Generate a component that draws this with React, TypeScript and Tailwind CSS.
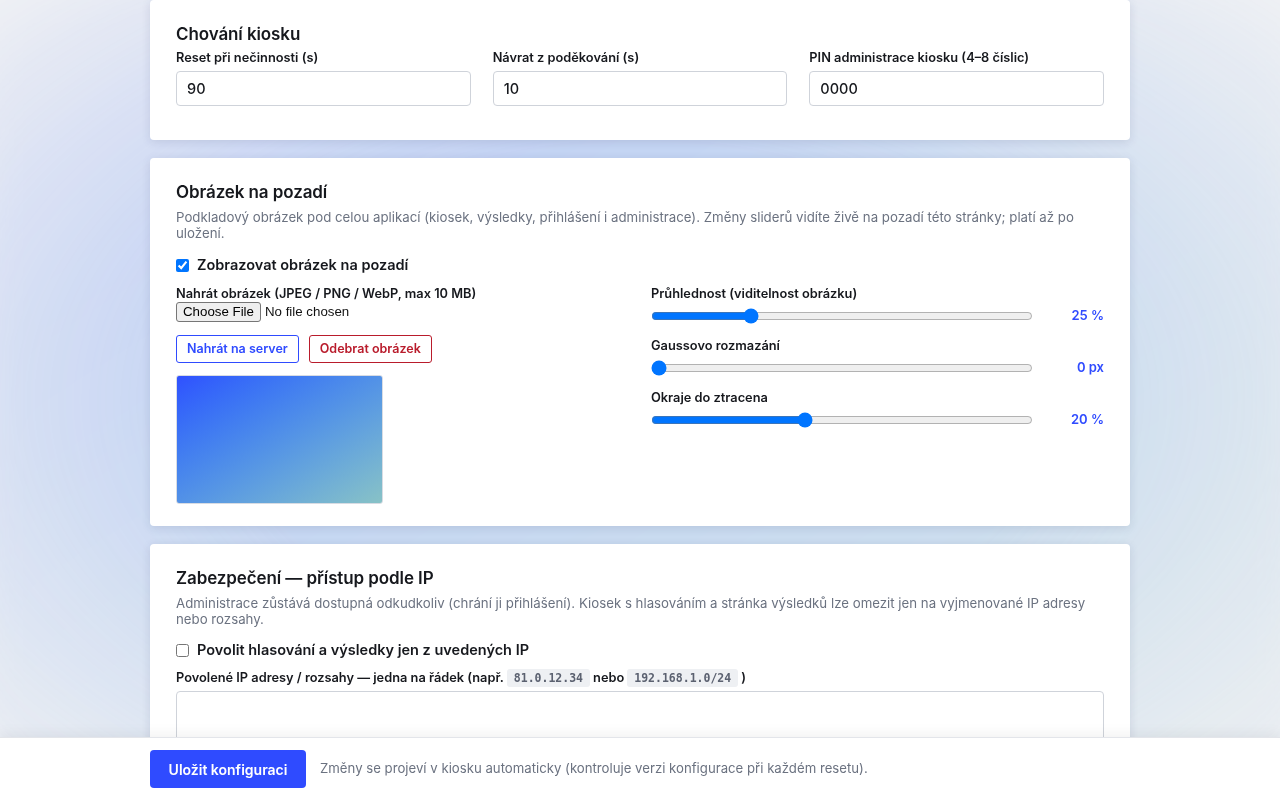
import { useState } from 'react';

const FONT = "font-['Inter','Noto_Sans',sans-serif]";

function Card({ title, description, children }: { title: string; description?: string; children: React.ReactNode }) {
  return (
    <section className="bg-white rounded-[4px] shadow-[0_2px_10px_rgba(30,40,90,0.12)] px-[26px] pt-[23px] pb-[22px]">
      <h2 className="text-[17px] leading-[22px] font-semibold text-[#16181d] tracking-[-0.1px]">{title}</h2>
      {description && (
        <p className="mt-[6px] text-[13.25px] leading-[16px] text-[#6b7280]">{description}</p>
      )}
      {children}
    </section>
  );
}

function Field({ label, value }: { label: string; value: string }) {
  return (
    <div className="flex flex-col">
      <label className="text-[12.8px] leading-[16px] font-semibold text-[#16181d]">{label}</label>
      <input
        defaultValue={value}
        className="mt-[5px] h-[35px] rounded-[4px] border border-[#cfd3da] px-[10px] text-[14.5px] font-medium text-[#16181d] outline-none"
      />
    </div>
  );
}

function Slider({ label, value, max, unit }: { label: string; value: number; max: number; unit: string }) {
  const [v, setV] = useState(value);
  return (
    <div className="flex flex-col">
      <span className="text-[12.8px] leading-[16px] font-semibold text-[#16181d]">{label}</span>
      <div className="grid grid-cols-[1fr_56px] gap-[15px] items-center h-[28px]">
        <input
          type="range"
          min={0}
          max={max}
          value={v}
          onChange={(e) => setV(Number(e.target.value))}
          className="w-full m-0"
        />
        <span className="text-right text-[13px] font-semibold text-[#2f4bff]">
          {v} {unit}
        </span>
      </div>
    </div>
  );
}

function Code({ children }: { children: React.ReactNode }) {
  return (
    <code className="mx-[3px] inline-block rounded-[3px] bg-[#eef0f3] px-[7px] leading-[18px] text-[11.5px] font-['DejaVu_Sans_Mono',monospace] font-bold text-[#5b6170]">
      {children}
    </code>
  );
}

export default function App() {
  return (
    <div className={`${FONT} relative min-h-screen bg-[#eef0f4] overflow-hidden`}>
      {/* blurred background image preview */}
      <div className="fixed inset-0 pointer-events-none [mask-image:radial-gradient(ellipse_at_center,black_45%,transparent_100%)]">
        <div className="absolute inset-[-40px] bg-gradient-to-br from-[#3355ff] to-[#88c0c8] opacity-25 blur-[30px]" />
      </div>

      <main className="relative mx-auto w-[980px] flex flex-col gap-[18px] pb-[120px]">
        <Card title="Chování kiosku">
          <div className="mt-[5px] grid grid-cols-3 gap-[22px] pb-[12px]">
            <Field label="Reset při nečinnosti (s)" value="90" />
            <Field label="Návrat z poděkování (s)" value="10" />
            <Field label="PIN administrace kiosku (4–8 číslic)" value="0000" />
          </div>
        </Card>

        <Card
          title="Obrázek na pozadí"
          description="Podkladový obrázek pod celou aplikací (kiosek, výsledky, přihlášení i administrace). Změny sliderů vidíte živě na pozadí této stránky; platí až po uložení."
        >
          <label className="mt-[14px] flex items-center gap-[8px] h-[20px] text-[14.5px] font-semibold text-[#16181d]">
            <input type="checkbox" defaultChecked className="m-0 w-[13px] h-[13px]" />
            Zobrazovat obrázek na pozadí
          </label>

          <div className="mt-[11px] grid grid-cols-2 gap-[22px]">
            <div className="flex flex-col">
              <span className="text-[12.8px] leading-[16px] font-semibold text-[#16181d]">
                Nahrát obrázek (JPEG / PNG / WebP, max 10 MB)
              </span>
              <input
                type="file"
                accept="image/*"
                className="h-[20px] text-[13.3px] leading-[18px] text-[#111] font-['Liberation_Sans',Arial,sans-serif] file:h-[20px] file:mr-[4px] file:px-[6px] file:rounded-[3px] file:border file:border-solid file:border-[#767676] file:bg-[#efefef] file:text-[13.3px] file:text-black file:font-['Liberation_Sans',Arial,sans-serif]"
              />
              <div className="mt-[13px] flex gap-[10px]">
                <button className="h-[28px] px-[10px] rounded-[3px] border border-[#2f4bff] text-[12.5px] font-semibold text-[#2f4bff] bg-white">
                  Nahrát na server
                </button>
                <button className="h-[28px] px-[10px] rounded-[3px] border border-[#b91c2c] text-[12.5px] font-semibold text-[#b91c2c] bg-white">
                  Odebrat obrázek
                </button>
              </div>
              <div className="mt-[12px] w-[207px] h-[129px] rounded-[3px] border border-[#d8dce3] bg-gradient-to-br from-[#3050ff] to-[#88c2c6]" />
            </div>

            <div className="flex flex-col gap-[8px]">
              <Slider label="Průhlednost (viditelnost obrázku)" value={25} max={100} unit="%" />
              <Slider label="Gaussovo rozmazání" value={0} max={40} unit="px" />
              <Slider label="Okraje do ztracena" value={20} max={50} unit="%" />
            </div>
          </div>
        </Card>

        <Card
          title="Zabezpečení — přístup podle IP"
          description="Administrace zůstává dostupná odkudkoliv (chrání ji přihlášení). Kiosek s hlasováním a stránka výsledků lze omezit jen na vyjmenované IP adresy nebo rozsahy."
        >
          <label className="mt-[13px] flex items-center gap-[8px] h-[20px] text-[14.5px] font-semibold text-[#16181d]">
            <input type="checkbox" className="m-0 w-[13px] h-[13px]" />
            Povolit hlasování a výsledky jen z uvedených IP
          </label>
          <div className="mt-[9px] text-[12.8px] leading-[18px] font-semibold text-[#16181d]">
            Povolené IP adresy / rozsahy — jedna na řádek (např.<Code>81.0.12.34</Code>nebo<Code>192.168.1.0/24</Code>)
          </div>
          <textarea className="mt-[4px] w-full h-[110px] rounded-[4px] border border-[#cfd3da] outline-none resize-none" />
        </Card>
      </main>

      <footer className="fixed bottom-0 left-0 right-0 h-[63px] bg-white border-t border-[#e3e5ea] shadow-[0_-4px_12px_rgba(0,0,0,0.05)]">
        <div className="mx-auto w-[980px] h-full flex items-center gap-[14px]">
          <button className="h-[38px] w-[156px] rounded-[4px] bg-[#2f4bff] text-white text-[14px] font-semibold">
            Uložit konfiguraci
          </button>
          <span className="text-[13.2px] text-[#6b7280]">
            Změny se projeví v kiosku automaticky (kontroluje verzi konfigurace při každém resetu).
          </span>
        </div>
      </footer>
    </div>
  );
}
